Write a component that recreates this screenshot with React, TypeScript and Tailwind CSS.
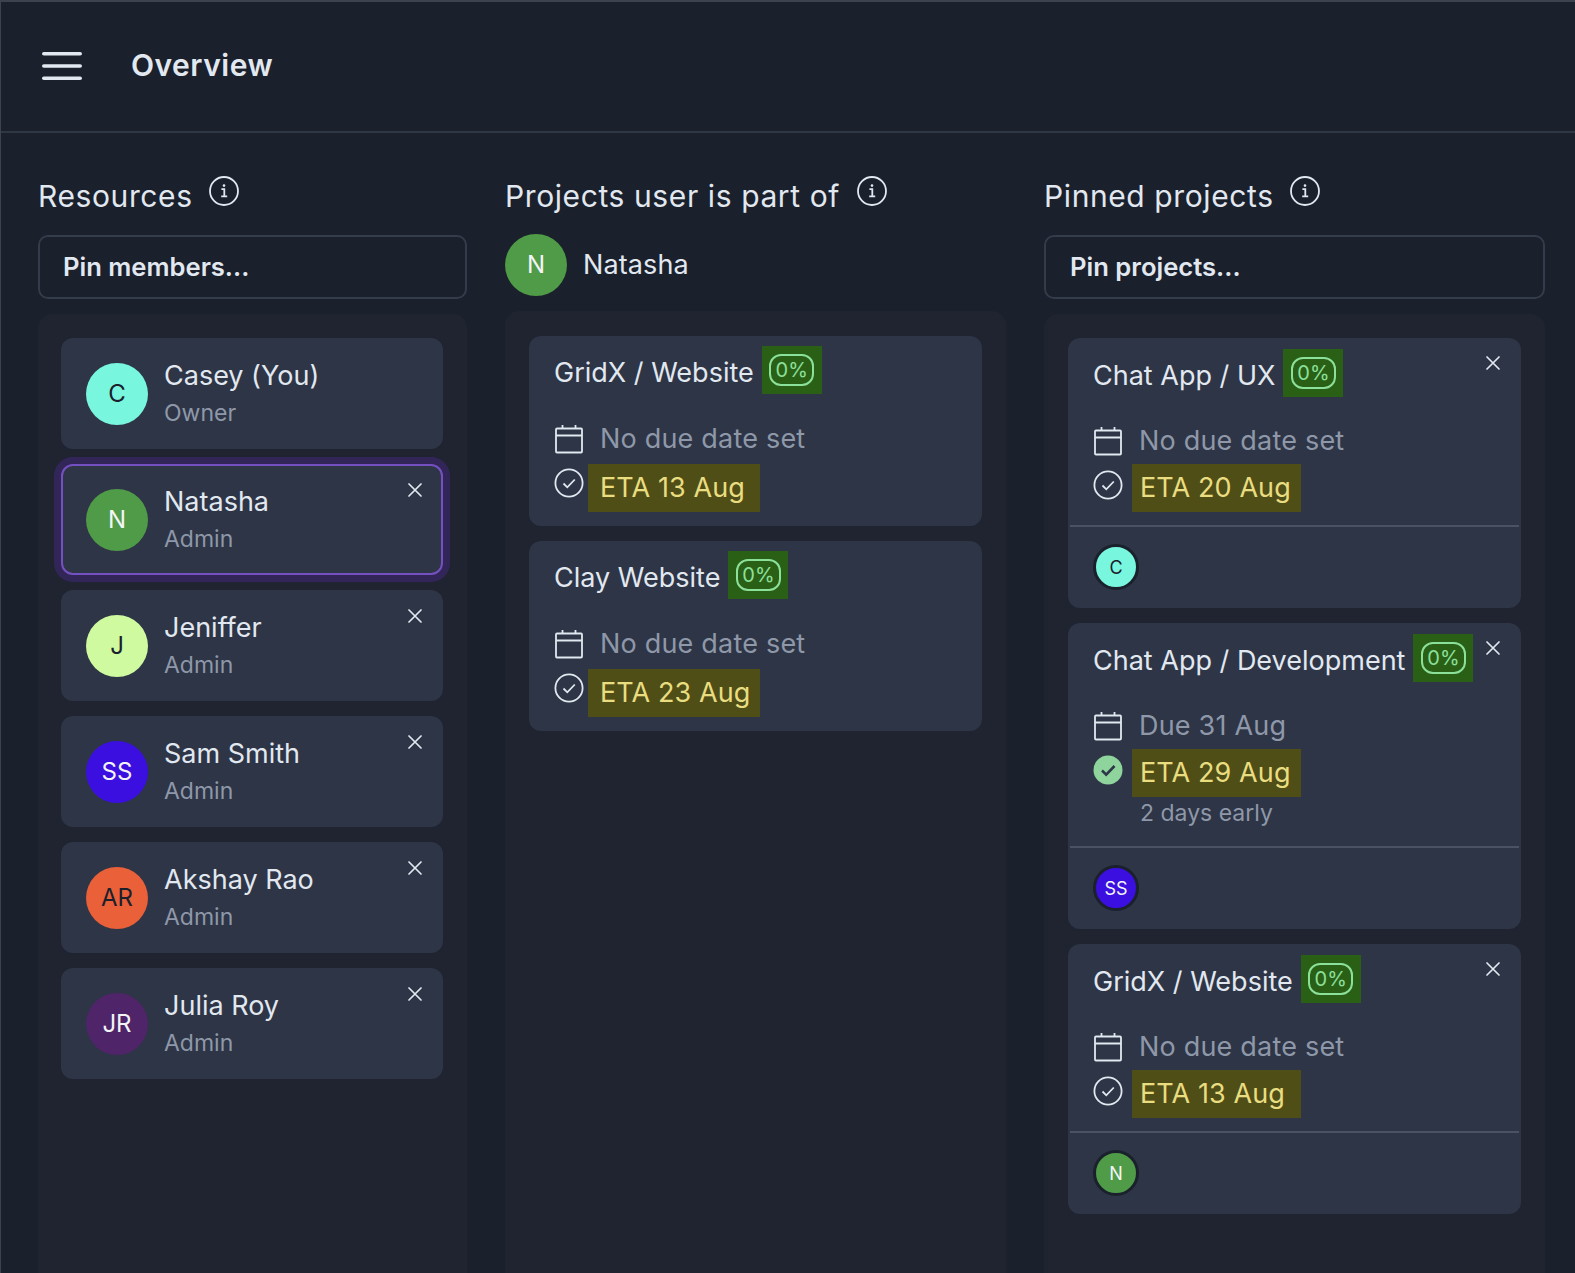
import React from "react";

const font = { fontFamily: "Inter, 'Noto Sans', sans-serif" };

function Info() {
  return (
    <svg width="30" height="30" viewBox="0 0 30 30" fill="none" stroke="#e2e8f0" className="mb-[10px] shrink-0">
      <circle cx="15" cy="15" r="14" strokeWidth="1.8" />
      <circle cx="15" cy="9.6" r="1.3" fill="#e2e8f0" stroke="none" />
      <path d="M12.4 13.2h2.9v7M12.2 20.4h6" strokeWidth="1.8" />
    </svg>
  );
}

function Close({ pos }: { pos: string }) {
  return (
    <svg width="14" height="14" viewBox="0 0 14 14" stroke="#e2e8f0" strokeWidth="1.7" strokeLinecap="round" className={`absolute ${pos}`}>
      <path d="M1 1l12 12M13 1L1 13" />
    </svg>
  );
}

function Calendar() {
  return (
    <svg width="28" height="30" viewBox="0 0 28 30" fill="none" stroke="#e2e8f0" strokeWidth="1.8" className="shrink-0">
      <rect x="1" y="4.5" width="26" height="24" rx="1" />
      <path d="M1 11.5h26M7.5 1v4M20.5 1v4" />
    </svg>
  );
}

function Check({ done }: { done?: boolean }) {
  if (done) {
    return (
      <svg width="30" height="30" viewBox="0 0 30 30" className="shrink-0">
        <circle cx="15" cy="15" r="14.5" fill="#8ed49c" />
        <path d="M9 15.5l4.2 4.2L21.5 11" fill="none" stroke="#2d3748" strokeWidth="2.6" />
      </svg>
    );
  }
  return (
    <svg width="30" height="30" viewBox="0 0 30 30" fill="none" stroke="#e2e8f0" strokeWidth="1.8" className="shrink-0">
      <circle cx="15" cy="15" r="13.6" />
      <path d="M9.5 15.5l3.8 3.8L20.8 11.5" />
    </svg>
  );
}

const members = [
  { i: "C", n: "Casey (You)", r: "Owner", bg: "bg-[#79f7de]", fg: "text-[#1a202c]", close: false, sel: false },
  { i: "N", n: "Natasha", r: "Admin", bg: "bg-[#4f9b47]", fg: "text-[#f3f4f6]", close: true, sel: true },
  { i: "J", n: "Jeniffer", r: "Admin", bg: "bg-[#cffa9f]", fg: "text-[#1a202c]", close: true, sel: false },
  { i: "SS", n: "Sam Smith", r: "Admin", bg: "bg-[#3b0fe0]", fg: "text-[#f3f4f6]", close: true, sel: false },
  { i: "AR", n: "Akshay Rao", r: "Admin", bg: "bg-[#ea6039]", fg: "text-[#1a202c]", close: true, sel: false },
  { i: "JR", n: "Julia Roy", r: "Admin", bg: "bg-[#4f2468]", fg: "text-[#f3f4f6]", close: true, sel: false },
];

function Member({ m }: { m: (typeof members)[number] }) {
  return (
    <div
      className={
        m.sel
          ? "relative flex h-[111px] items-center gap-[16px] rounded-[12px] border-2 border-[#7550c0] bg-[#2d3546] pl-[23px] shadow-[0_0_0_7px_#322659]"
          : "relative flex h-[111px] items-center gap-[16px] rounded-[12px] bg-[#2d3546] pl-[25px]"
      }
    >
      <div className={`flex h-[62px] w-[62px] items-center justify-center rounded-full text-[24px] ${m.bg} ${m.fg}`}>{m.i}</div>
      <div className="flex flex-col">
        <div className="text-[27px] leading-[38px] text-[#e2e8f0]">{m.n}</div>
        <div className="text-[23px] leading-[36px] text-[#8f98a9]">{m.r}</div>
      </div>
      {m.close && <Close pos={m.sel ? "right-[19px] top-[16.5px]" : "right-[21px] top-[18.5px]"} />}
    </div>
  );
}

function Project(p: {
  title: string;
  due: string;
  eta: string;
  note?: string;
  done?: boolean;
  pinned?: boolean;
  pin?: { i: string; bg: string; fg: string };
}) {
  return (
    <div className="relative rounded-[12px] bg-[#2d3546]">
      <div className={p.pinned ? "pb-[13px] pl-[26px] pt-[11px]" : "pb-[14px] pl-[26px] pt-[10px]"}>
        <div className="-ml-[1px] flex h-[48px] items-center">
          <span className="mt-[6px] text-[27px] text-[#e2e8f0]">{p.title}</span>
          <span className="ml-[8px] flex h-[48px] w-[60px] items-center justify-center bg-[#2a5f16]">
            <span className="flex h-[32px] w-[45px] items-center justify-center rounded-[12px] border-2 border-[#8be09a] text-[20px] text-[#8be09a]">0%</span>
          </span>
        </div>
        <div className={p.pinned ? "mt-[28px] flex h-[32px] items-center gap-[17px]" : "mt-[29px] flex h-[32px] items-center gap-[17px]"}>
          <Calendar />
          <span className="text-[27px] tracking-[0.2px] text-[#8f98a9]">{p.due}</span>
        </div>
        <div className={p.pinned ? "mt-[7px] flex items-start" : "mt-[9px] flex items-start"}>
          <div className={p.pinned ? "-ml-[1px] mt-[6px]" : "-ml-[1px] mt-[4px]"}>
            <Check done={p.done} />
          </div>
          <div
            className={
              p.pinned
                ? "ml-[9px] flex h-[48px] w-[169px] items-center bg-[#504e17] pl-[8px] text-[27px] tracking-[0.1px] text-[#e9dd80]"
                : "ml-[4px] flex h-[48px] w-[172px] items-center bg-[#504e17] pl-[12px] text-[27px] tracking-[0.1px] text-[#e9dd80]"
            }
          >
            {p.eta}
          </div>
        </div>
        {p.note && <div className="mb-[4px] ml-[46px] text-[23px] leading-[32px] text-[#8f98a9]">{p.note}</div>}
      </div>
      {p.pin && (
        <div className="mx-[2px] border-t-2 border-[#4a5263] pb-[18px] pl-[23px] pt-[17px]">
          <div className={`flex h-[46px] w-[46px] items-center justify-center rounded-full border-[3px] border-[#1a202c] text-[18px] ${p.pin.bg} ${p.pin.fg}`}>{p.pin.i}</div>
        </div>
      )}
      {p.pinned && <Close pos="right-[21px] top-[18px]" />}
    </div>
  );
}

export default function App() {
  return (
    <div style={font} className="h-[1273px] w-[1575px] overflow-hidden border-l border-t-2 border-[#3c424e] bg-[#1a202c]">
      <header className="flex h-[131px] items-center gap-[49px] border-b-2 border-[#2f3644] pb-[2px] pl-[41px]">
        <svg width="40" height="28" viewBox="0 0 40 28" fill="#e2e8f0">
          <rect x="0" y="0" width="40" height="3.6" rx="1.8" />
          <rect x="0" y="12.2" width="40" height="3.6" rx="1.8" />
          <rect x="0" y="24.4" width="40" height="3.6" rx="1.8" />
        </svg>
        <h1 className="text-[30px] font-semibold tracking-[0.5px] text-[#e2e8f0]">Overview</h1>
      </header>
      <main className="grid grid-cols-[429px_501px_501px] gap-[38px] pl-[37px]">
        <section>
          <div className="flex h-[102px] items-center gap-[16px] pt-[24px]">
            <h2 className="text-[30px] tracking-[0.6px] text-[#e2e8f0]">Resources</h2>
            <Info />
          </div>
          <div className="flex h-[64px] items-center rounded-[10px] border-2 border-[#343b4a] pl-[23px] text-[25.6px] font-semibold text-[#e2e8f0]">Pin members...</div>
          <div className="mt-[15px] flex h-[1000px] flex-col gap-[15px] rounded-[14px] bg-[#1f2430] pl-[23px] pr-[24px] pt-[24px]">
            {members.map((m) => (
              <Member key={m.n} m={m} />
            ))}
          </div>
        </section>
        <section>
          <div className="flex h-[102px] items-center gap-[17px] pt-[24px]">
            <h2 className="text-[30px] tracking-[0.6px] text-[#e2e8f0]">Projects user is part of</h2>
            <Info />
          </div>
          <div className="-mt-[2px] flex h-[64px] items-center gap-[16px]">
            <div className="flex h-[62px] w-[62px] items-center justify-center rounded-full bg-[#4f9b47] text-[24px] text-[#f3f4f6]">N</div>
            <span className="text-[27px] tracking-[0.1px] text-[#e2e8f0]">Natasha</span>
          </div>
          <div className="mt-[14px] flex h-[1000px] flex-col gap-[15px] rounded-[14px] bg-[#1f2430] px-[24px] pt-[25px]">
            <Project title="GridX / Website" due="No due date set" eta="ETA 13 Aug" />
            <Project title="Clay Website" due="No due date set" eta="ETA 23 Aug" />
          </div>
        </section>
        <section>
          <div className="flex h-[102px] items-center gap-[16px] pt-[24px]">
            <h2 className="text-[30px] tracking-[0.6px] text-[#e2e8f0]">Pinned projects</h2>
            <Info />
          </div>
          <div className="flex h-[64px] items-center rounded-[10px] border-2 border-[#343b4a] pl-[24px] text-[25.6px] font-semibold text-[#e2e8f0]">Pin projects...</div>
          <div className="mt-[15px] flex h-[1000px] flex-col gap-[15px] rounded-[14px] bg-[#1f2430] px-[24px] pt-[24px]">
            <Project pinned title="Chat App / UX" due="No due date set" eta="ETA 20 Aug" pin={{ i: "C", bg: "bg-[#79f7de]", fg: "text-[#1a202c]" }} />
            <Project pinned title="Chat App / Development" due="Due 31 Aug" eta="ETA 29 Aug" note="2 days early" done pin={{ i: "SS", bg: "bg-[#3b0fe0]", fg: "text-[#f3f4f6]" }} />
            <Project pinned title="GridX / Website" due="No due date set" eta="ETA 13 Aug" pin={{ i: "N", bg: "bg-[#4f9b47]", fg: "text-[#f3f4f6]" }} />
          </div>
        </section>
      </main>
    </div>
  );
}
